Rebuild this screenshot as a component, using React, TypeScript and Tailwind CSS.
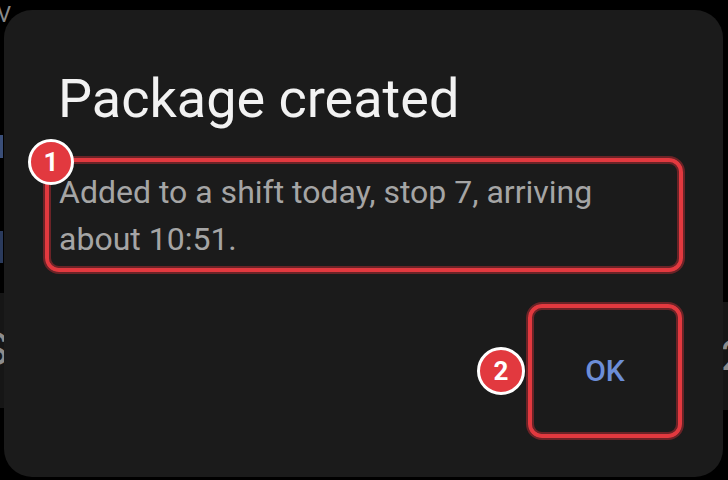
export default function App() {
  return (
    <div className="relative w-[728px] h-[480px] overflow-hidden bg-black font-['Roboto',sans-serif]">
      {/* peeks of the screen behind the dialog */}
      <span className="absolute left-[-3px] top-[4px] text-[22px] leading-none text-[#8a8a8a]">V</span>
      <div className="absolute left-0 top-[135px] w-[3px] h-[23px] bg-[#3a4e78]" />
      <div className="absolute left-0 top-[231px] w-[3px] h-[32px] bg-[#2a3a5c]" />
      <div className="absolute left-0 top-[293px] w-[6px] h-[115px] bg-[#161616]" />
      <span className="absolute left-[-19px] top-[326px] text-[46px] leading-none text-[#8c8c8c]">S</span>
      <div className="absolute right-0 top-[302px] w-[8px] h-[108px] bg-[#161616]" />
      <span className="absolute left-[721px] top-[335px] text-[42px] leading-none text-[#8c8c8c]">2</span>

      <div className="absolute left-[4px] top-[10px] w-[719px] h-[467px] rounded-[28px] bg-[#1b1b1b] flex flex-col">
        <h1 className="mt-[62px] pl-[54px] text-[54px] leading-[53px] font-normal text-[#f2f2f2]">
          Package created
        </h1>

        <div className="relative mt-[44px] ml-[55px] mr-[58px]">
          <p className="text-[32px] leading-[47px] text-[#a5a5a5]">
            Added to a shift today, stop 7, arriving about 10:51.
          </p>
          <div className="absolute -left-[14px] -top-[11px] -bottom-[9px] -right-[18px] rounded-[14px] border-[4px] border-[#e2393f] shadow-[0_0_0_2px_#6b2327,inset_0_0_0_2px_#6b2327]" />
          <div className="absolute -left-[31px] -top-[30px] w-[46px] h-[46px] rounded-full bg-[#e2393f] border-[3px] border-white flex items-center justify-center text-white text-[26px] font-bold leading-none">
            1
          </div>
        </div>

        <div className="flex justify-end pr-[41px] mt-[41px]">
          <div className="relative w-[154px] h-[134px] flex items-center justify-center">
            <span className="text-[30px] font-medium text-[#6c8ed8] leading-none">OK</span>
            <div className="absolute inset-0 rounded-[14px] border-[4px] border-[#e2393f] shadow-[0_0_0_2px_#6b2327,inset_0_0_0_2px_#6b2327]" />
            <div className="absolute -left-[51px] top-[43px] w-[48px] h-[48px] rounded-full bg-[#e2393f] border-[3px] border-white flex items-center justify-center text-white text-[26px] font-bold leading-none">
              2
            </div>
          </div>
        </div>
      </div>
    </div>
  );
}
